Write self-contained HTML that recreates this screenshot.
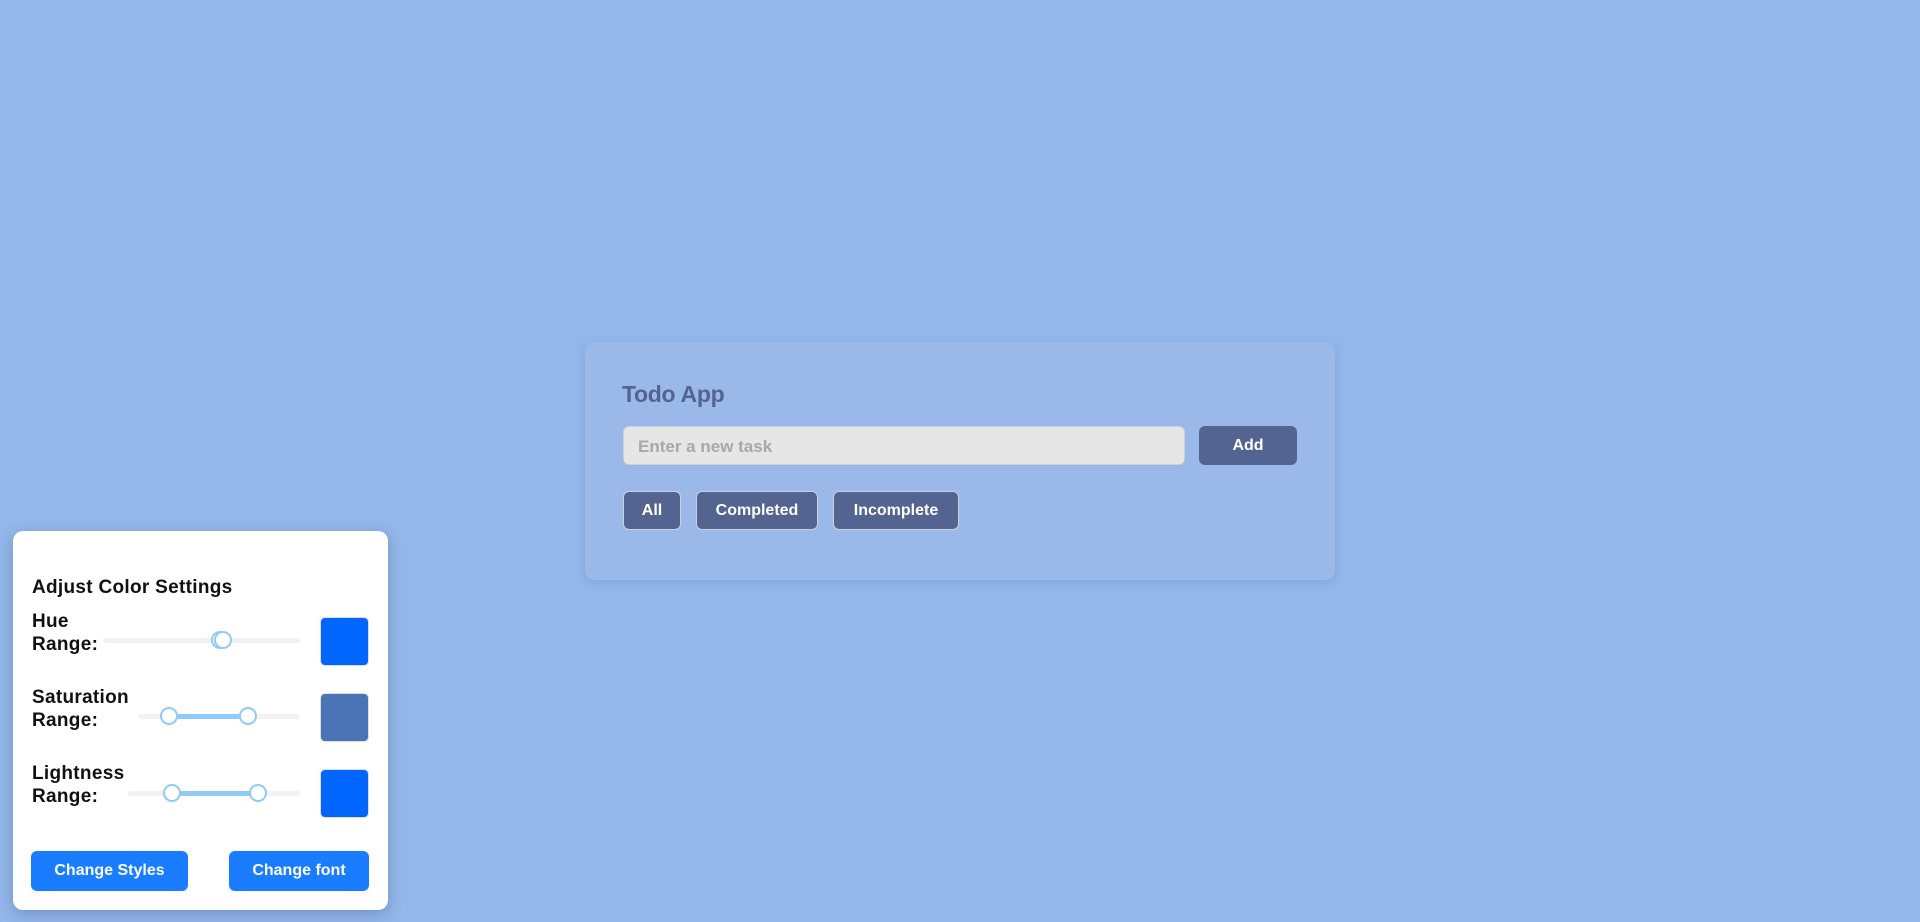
<!DOCTYPE html>
<html><head><meta charset="utf-8"><style>
*{box-sizing:border-box;margin:0;padding:0}
body{width:1920px;height:922px;background:#93b7ea;font-family:"Liberation Sans",sans-serif;position:relative;overflow:hidden}
.card{position:absolute;left:585px;top:342px;width:750px;height:238px;background:#9ab9e9;border-radius:9px;box-shadow:0 2px 10px rgba(60,90,140,.18)}
.card h1{position:absolute;left:37px;top:39px;font-size:23px;font-weight:bold;color:#53658f;letter-spacing:-0.3px}
.inp{position:absolute;left:38px;top:84px;width:562px;height:39px;background:#e6e6e6;border:1px solid #c9cfd9;border-radius:6px;font-size:17px;color:#a8a8a8;padding:10px 14px;font-weight:bold}
.btn{position:absolute;background:#52648f;color:#fff;font-weight:bold;font-size:16px;border-radius:6px;display:flex;align-items:center;justify-content:center;height:39px}
.fb{border:1px solid #c8d0dc;top:149px}
.panel{position:absolute;left:13px;top:531px;width:375px;height:379px;background:#fff;border-radius:10px;box-shadow:0 4px 14px rgba(40,60,100,.3)}
.t{position:absolute;left:19px;font-size:19px;font-weight:bold;color:#111;line-height:23px;letter-spacing:0.3px}
.track{position:absolute;height:5px;background:#f2f2f2;border-radius:3px}
.fill{position:absolute;height:5px;background:#90caf9}
.th{position:absolute;width:18px;height:18px;border:2.5px solid #90caf9;background:#fff;border-radius:50%}
.sw{position:absolute;left:307px;width:49px;height:49px;border:1px solid #ddd;border-radius:5px}
.pb{position:absolute;top:320px;height:40px;background:#1a7cff;color:#fff;font-weight:bold;font-size:16px;border-radius:6px;display:flex;align-items:center;justify-content:center}
</style></head><body>
<div class="card">
<h1>Todo App</h1>
<div class="inp">Enter a new task</div>
<div class="btn" style="left:614px;top:84px;width:98px">Add</div>
<div class="btn fb" style="left:38px;width:58px">All</div>
<div class="btn fb" style="left:111px;width:122px">Completed</div>
<div class="btn fb" style="left:248px;width:126px">Incomplete</div>
</div>
<div class="panel">
<div class="t" style="top:45px">Adjust Color Settings</div>
<div class="t" style="top:79px">Hue<br>Range:</div>
<div class="track" style="left:90px;top:107px;width:197px"></div>
<div class="th" style="left:198px;top:100px"></div>
<div class="th" style="left:201px;top:100px"></div>
<div class="sw" style="top:86px;background:#0066ff"></div>
<div class="t" style="top:155px">Saturation<br>Range:</div>
<div class="track" style="left:125px;top:183px;width:162px"></div>
<div class="fill" style="left:156px;top:183px;width:79px"></div>
<div class="th" style="left:147px;top:176px"></div>
<div class="th" style="left:226px;top:176px"></div>
<div class="sw" style="top:162px;background:#4a74b5"></div>
<div class="t" style="top:231px">Lightness<br>Range:</div>
<div class="track" style="left:115px;top:260px;width:172px"></div>
<div class="fill" style="left:159px;top:260px;width:86px"></div>
<div class="th" style="left:150px;top:253px"></div>
<div class="th" style="left:236px;top:253px"></div>
<div class="sw" style="top:238px;background:#0066ff"></div>
<div class="pb" style="left:18px;width:157px">Change Styles</div>
<div class="pb" style="left:216px;width:140px">Change font</div>
</div>
</body></html>
